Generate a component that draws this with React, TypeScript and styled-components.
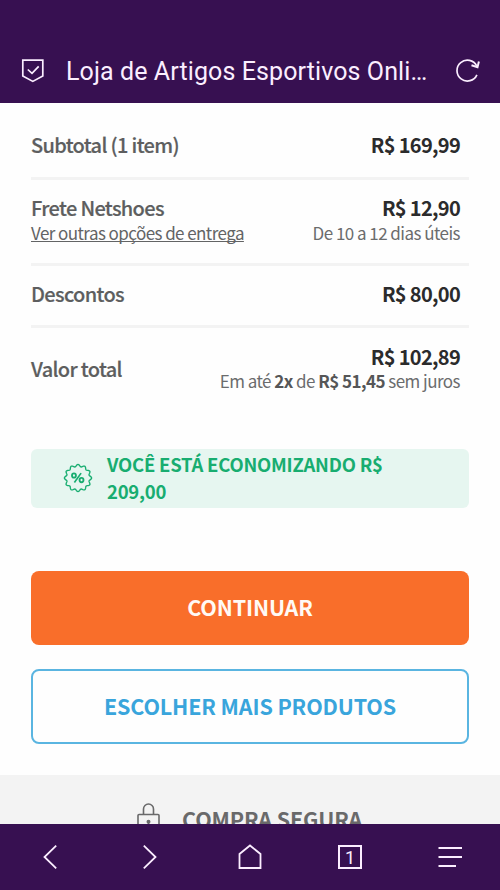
import React from "react";
import styled, { createGlobalStyle } from "styled-components";

const Global = createGlobalStyle`
  * { box-sizing: border-box; }
  html, body { margin: 0; padding: 0; background: #fff; }
  button { font: inherit; cursor: pointer; }
`;

const Screen = styled.div`
  width: 500px;
  height: 890px;
  display: flex;
  flex-direction: column;
  overflow: hidden;
  background: #fefefe;
  font-family: "Noto Sans CJK SC", "Noto Sans", sans-serif;
  color: #5d5e5f;
`;

const AddressBar = styled.header`
  flex: none;
  height: 103px;
  padding: 39px 18px 0 20px;
  display: flex;
  align-items: center;
  background: #371051;
  color: #fbeeff;
`;

const PageTitle = styled.h1`
  flex: 1;
  margin: 0 0 0 21px;
  padding-top: 2px;
  font: 400 25px/32px Roboto, sans-serif;
  letter-spacing: 0.1px;
  white-space: nowrap;
`;

const Content = styled.main`
  flex: 1;
  min-height: 0;
  overflow: hidden;
  display: flex;
  flex-direction: column;
`;

const Summary = styled.section`
  padding: 0 31px;
  height: 346px;
  flex: none;
`;

const Row = styled.div<{ $height: number; $top: number; $last?: boolean }>`
  height: ${(p) => p.$height}px;
  padding: ${(p) => p.$top}px 9px 0 0;
  display: flex;
  justify-content: space-between;
  align-items: flex-start;
  border-bottom: ${(p) => (p.$last ? "0" : "3px solid #f3f3f3")};
`;

const Cell = styled.div<{ $end?: boolean; $gap?: number; $drop?: number }>`
  display: flex;
  flex-direction: column;
  align-items: ${(p) => (p.$end ? "flex-end" : "flex-start")};
  gap: ${(p) => p.$gap ?? 0}px;
  padding-top: ${(p) => p.$drop ?? 0}px;
  white-space: nowrap;
`;

const Label = styled.span`
  font-size: 20px;
  font-weight: 500;
  line-height: 24px;
  letter-spacing: -0.66px;
  -webkit-text-stroke: 0.2px currentColor;
`;

const Price = styled.span`
  font-size: 20px;
  font-weight: 700;
  line-height: 24px;
  color: #2b2b2c;
  letter-spacing: -0.7px;
`;

const Note = styled.span`
  font-size: 17px;
  line-height: 24px;
  color: #6b6c6d;
  letter-spacing: -0.54px;
  b { font-weight: 700; color: #555657; }
`;

const DeliveryLink = styled.a`
  font-size: 17px;
  line-height: 24px;
  color: #636465;
  letter-spacing: -0.57px;
  text-decoration: underline;
  text-decoration-thickness: 1px;
  text-underline-offset: 1px;
  text-decoration-skip-ink: none;
`;

const Savings = styled.div`
  flex: none;
  height: 59px;
  margin: 0 31px;
  padding: 0 0 2px 32px;
  display: flex;
  align-items: center;
  border-radius: 6px;
  background: #e6f6f0;
  color: #18ad70;
`;

const SavingsText = styled.p`
  margin: 0 0 0 14px;
  width: 300px;
  font-size: 18.5px;
  font-weight: 700;
  line-height: 27px;
  letter-spacing: -0.24px;
`;

const Actions = styled.div`
  flex: none;
  margin: 63px 31px 31px;
  display: flex;
  flex-direction: column;
  gap: 24px;
`;

const Button = styled.button<{ $primary?: boolean }>`
  height: ${(p) => (p.$primary ? 74 : 75)}px;
  padding: 0 0 2px;
  border: ${(p) => (p.$primary ? "0" : "2px solid #5ab5e1")};
  border-radius: 8px;
  background: ${(p) => (p.$primary ? "#f96e2a" : "#fefefe")};
  color: ${(p) => (p.$primary ? "#fffaf5" : "#39a5dc")};
  font-size: 21.5px;
  font-weight: 700;
  line-height: 30px;
  letter-spacing: -0.14px;
`;

const Secure = styled.section`
  flex: none;
  height: 110px;
  padding: 28px 0 0 137px;
  display: flex;
  align-items: flex-start;
  background: #f3f3f3;
  color: #69696a;
`;

const SecureText = styled.strong`
  margin: 0 0 0 22px;
  padding-top: 1px;
  font-size: 21.5px;
  font-weight: 700;
  line-height: 30px;
  letter-spacing: -0.14px;
`;

const NavBar = styled.nav`
  flex: none;
  height: 66px;
  display: grid;
  grid-template-columns: repeat(5, 1fr);
  place-items: center;
  background: #371051;
  color: #fbeeff;
`;

const TabCount = styled.span`
  width: 24px;
  height: 24px;
  border: 2px solid #fbeeff;
  display: flex;
  align-items: center;
  justify-content: center;
  padding-top: 1px;
  font: 400 18px/20px Roboto, sans-serif;
`;

const Icon = styled.svg`
  display: block;
  flex: none;
  fill: none;
  stroke: currentColor;
`;

const badgePath = (() => {
  const points: string[] = [];
  const teeth = 12;
  for (let i = 0; i < 144; i++) {
    const turn = (i / 144) * Math.PI * 2;
    const a = turn - Math.PI / 2;
    const r = 12.1 + 1.05 * Math.cos(turn * teeth);
    points.push(`${(14.5 + r * Math.cos(a)).toFixed(2)} ${(14.5 + r * Math.sin(a)).toFixed(2)}`);
  }
  return `M${points.join("L")}Z`;
})();

export default function App() {
  return (
    <Screen>
      <Global />
      <AddressBar>
        <Icon width="25" height="26" viewBox="0 0 25 26" strokeWidth="1.7">
          <path d="M2.8 2.2H22.8V18L12.8 23.4L2.8 18Z" />
          <path d="M7.8 11.5L12 15.4L18.7 8.3" />
        </Icon>
        <PageTitle>Loja de Artigos Esportivos Onli…</PageTitle>
        <Icon width="28" height="28" viewBox="0 0 28 28" strokeWidth="1.7">
          <path d="M22.7 9A10.4 10.4 0 1 0 22.9 17.8" />
          <path d="M17.5 8.2L23.5 10.2L24.9 4.5" strokeWidth="2" />
        </Icon>
      </AddressBar>

      <Content>
        <Summary>
          <Row $height={77} $top={30}>
            <Cell><Label>Subtotal (1 item)</Label></Cell>
            <Cell $end><Price>R$ 169,99</Price></Cell>
          </Row>
          <Row $height={86} $top={16}>
            <Cell $gap={1}>
              <Label>Frete Netshoes</Label>
              <DeliveryLink>Ver outras opções de entrega</DeliveryLink>
            </Cell>
            <Cell $end $gap={1}>
              <Price>R$ 12,90</Price>
              <Note>De 10 a 12 dias úteis</Note>
            </Cell>
          </Row>
          <Row $height={62} $top={16}>
            <Cell><Label>Descontos</Label></Cell>
            <Cell $end><Price>R$ 80,00</Price></Cell>
          </Row>
          <Row $height={100} $top={17} $last>
            <Cell $drop={12}><Label>Valor total</Label></Cell>
            <Cell $end>
              <Price>R$ 102,89</Price>
              <Note>Em até <b>2x</b> de <b>R$ 51,45</b> sem juros</Note>
            </Cell>
          </Row>
        </Summary>

        <Savings>
          <Icon width="30" height="30" viewBox="0 0 29 29" strokeWidth="1.3" strokeLinejoin="round">
            <path d={badgePath} />
            <path d="M11 18.8L17.5 9.8" strokeWidth="1.6" />
            <ellipse cx="10.6" cy="12.1" rx="1.9" ry="2.1" strokeWidth="1.8" />
            <ellipse cx="17.9" cy="16.5" rx="1.9" ry="2.1" strokeWidth="1.8" />
          </Icon>
          <SavingsText>VOCÊ ESTÁ ECONOMIZANDO R$ 209,00</SavingsText>
        </Savings>

        <Actions>
          <Button $primary>CONTINUAR</Button>
          <Button>ESCOLHER MAIS PRODUTOS</Button>
        </Actions>

        <Secure>
          <Icon width="23" height="32" viewBox="0 0 23 32" strokeWidth="1.6">
            <path d="M6.5 11.5V6A5 5 0 0 1 16.5 6V11.5" />
            <rect x="1" y="11.5" width="21" height="19" rx="1" />
            <path d="M11.5 18V24" strokeWidth="1.5" />
            <circle cx="11.5" cy="18.8" r="1.2" fill="currentColor" />
          </Icon>
          <SecureText>COMPRA SEGURA</SecureText>
        </Secure>
      </Content>

      <NavBar>
        <Icon width="26" height="26" viewBox="0 0 26 26" strokeWidth="1.8">
          <path d="M19.2 1.7L7.5 13L19.2 24.3" />
        </Icon>
        <Icon width="26" height="26" viewBox="0 0 26 26" strokeWidth="1.8">
          <path d="M6.8 1.7L18.5 13L6.8 24.3" />
        </Icon>
        <Icon width="26" height="26" viewBox="0 0 26 26" strokeWidth="1.8">
          <path d="M2.5 24V10L13 1.5L23.5 10V24Z" />
        </Icon>
        <TabCount>1</TabCount>
        <Icon width="26" height="26" viewBox="0 0 26 26" strokeWidth="1.9">
          <path d="M1.5 4H25M1.5 13H25M1.5 22H19" />
        </Icon>
      </NavBar>
    </Screen>
  );
}
